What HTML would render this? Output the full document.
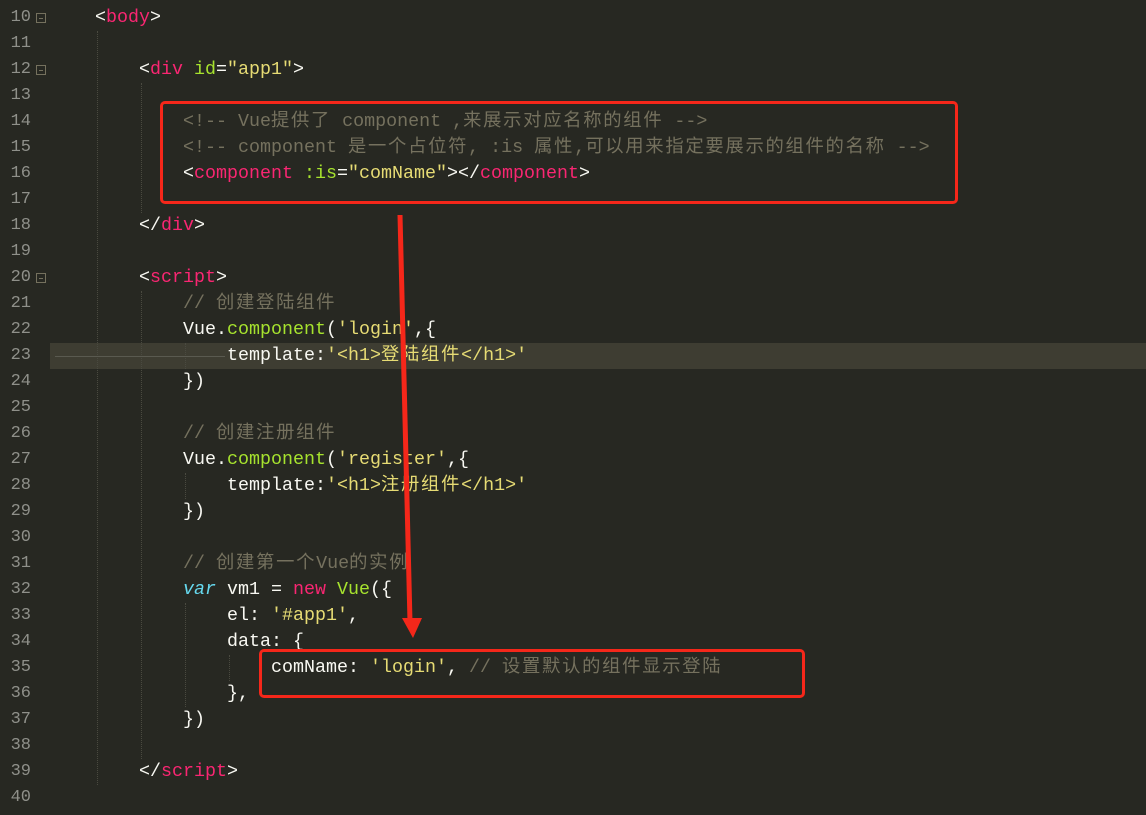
<!DOCTYPE html>
<html><head><meta charset="utf-8"><style>
body{margin:0;width:1146px;height:815px;background:#272822;overflow:hidden;position:relative;font-family:"Liberation Mono","Noto Sans CJK SC",monospace;font-size:18.33px}
.l{position:absolute;left:0;height:26px;line-height:26px;white-space:pre;color:#f8f8f2}
.n{position:absolute;left:0;width:31px;text-align:right;color:#8f908a;font-size:17px}
.f{position:absolute;left:36px;top:8px;width:8px;height:8px;border:1px solid #75715e}
.f:after{content:"";position:absolute;left:2px;top:4px;width:4px;height:1px;background:#75715e}
.c{position:absolute;white-space:pre}
.z{letter-spacing:1.7px}
.t{color:#f92672}.a{color:#a6e22e}.s{color:#e6db74}.m{color:#75715e}.v{color:#66d9ef;font-style:italic}
.g{position:absolute;width:0;border-left:1px dotted #4a4a40}
</style></head><body>
<div style="position:absolute;left:50px;top:343px;width:1096px;height:26px;background:#3e3d32"></div>
<div class="g" style="left:97px;top:31px;height:754px"></div>
<div class="g" style="left:141px;top:83px;height:130px"></div>
<div class="g" style="left:141px;top:291px;height:468px"></div>
<div class="g" style="left:185px;top:343px;height:26px"></div>
<div class="g" style="left:185px;top:473px;height:26px"></div>
<div class="g" style="left:185px;top:603px;height:104px"></div>
<div class="g" style="left:229px;top:655px;height:26px"></div>
<div style="position:absolute;left:55px;top:356px;width:170px;border-top:1px solid #5a5a50"></div>

<div class="l" style="top:5px"><span class="n">10</span><span class="f"></span><span class="c" style="left:95px">&lt;<span class="t">body</span>&gt;</span></div>
<div class="l" style="top:31px"><span class="n">11</span></div>
<div class="l" style="top:57px"><span class="n">12</span><span class="f"></span><span class="c" style="left:139px">&lt;<span class="t">div</span> <span class="a">id</span>=<span class="s">"app1"</span>&gt;</span></div>
<div class="l" style="top:83px"><span class="n">13</span></div>
<div class="l" style="top:109px"><span class="n">14</span><span class="c m" style="left:183px">&lt;!-- Vue<span class="z">提供了</span> component ,<span class="z">来展示对应名称的组件</span> --&gt;</span></div>
<div class="l" style="top:135px"><span class="n">15</span><span class="c m" style="left:183px">&lt;!-- component <span class="z">是一个占位符</span>, :is <span class="z">属性</span>,<span class="z">可以用来指定要展示的组件的名称</span> --&gt;</span></div>
<div class="l" style="top:161px"><span class="n">16</span><span class="c" style="left:183px">&lt;<span class="t">component</span> <span class="a">:is</span>=<span class="s">"comName"</span>&gt;&lt;/<span class="t">component</span>&gt;</span></div>
<div class="l" style="top:187px"><span class="n">17</span></div>
<div class="l" style="top:213px"><span class="n">18</span><span class="c" style="left:139px">&lt;/<span class="t">div</span>&gt;</span></div>
<div class="l" style="top:239px"><span class="n">19</span></div>
<div class="l" style="top:265px"><span class="n">20</span><span class="f"></span><span class="c" style="left:139px">&lt;<span class="t">script</span>&gt;</span></div>
<div class="l" style="top:291px"><span class="n">21</span><span class="c m" style="left:183px">// <span class="z">创建登陆组件</span></span></div>
<div class="l" style="top:317px"><span class="n">22</span><span class="c" style="left:183px">Vue.<span class="a">component</span>(<span class="s">'login'</span>,{</span></div>
<div class="l" style="top:343px"><span class="n">23</span><span class="c" style="left:227px">template:<span class="s">'&lt;h1&gt;<span class="z">登陆组件</span>&lt;/h1&gt;'</span></span></div>
<div class="l" style="top:369px"><span class="n">24</span><span class="c" style="left:183px">})</span></div>
<div class="l" style="top:395px"><span class="n">25</span></div>
<div class="l" style="top:421px"><span class="n">26</span><span class="c m" style="left:183px">// <span class="z">创建注册组件</span></span></div>
<div class="l" style="top:447px"><span class="n">27</span><span class="c" style="left:183px">Vue.<span class="a">component</span>(<span class="s">'register'</span>,{</span></div>
<div class="l" style="top:473px"><span class="n">28</span><span class="c" style="left:227px">template:<span class="s">'&lt;h1&gt;<span class="z">注册组件</span>&lt;/h1&gt;'</span></span></div>
<div class="l" style="top:499px"><span class="n">29</span><span class="c" style="left:183px">})</span></div>
<div class="l" style="top:525px"><span class="n">30</span></div>
<div class="l" style="top:551px"><span class="n">31</span><span class="c m" style="left:183px">// <span class="z">创建第一个</span>Vue<span class="z">的实例</span></span></div>
<div class="l" style="top:577px"><span class="n">32</span><span class="c" style="left:183px"><span class="v">var</span> vm1 = <span class="t">new</span> <span class="a">Vue</span>({</span></div>
<div class="l" style="top:603px"><span class="n">33</span><span class="c" style="left:227px">el: <span class="s">'#app1'</span>,</span></div>
<div class="l" style="top:629px"><span class="n">34</span><span class="c" style="left:227px">data: {</span></div>
<div class="l" style="top:655px"><span class="n">35</span><span class="c" style="left:271px">comName: <span class="s">'login'</span>, <span class="m">// <span class="z">设置默认的组件显示登陆</span></span></span></div>
<div class="l" style="top:681px"><span class="n">36</span><span class="c" style="left:227px">},</span></div>
<div class="l" style="top:707px"><span class="n">37</span><span class="c" style="left:183px">})</span></div>
<div class="l" style="top:733px"><span class="n">38</span></div>
<div class="l" style="top:759px"><span class="n">39</span><span class="c" style="left:139px">&lt;/<span class="t">script</span>&gt;</span></div>
<div class="l" style="top:785px"><span class="n">40</span></div>

<div style="position:absolute;left:160px;top:101px;width:792px;height:97px;border:3px solid #f5271a;border-radius:5px"></div>
<div style="position:absolute;left:259px;top:649px;width:540px;height:43px;border:3px solid #f5271a;border-radius:5px"></div>
<svg style="position:absolute;left:0;top:0" width="1146" height="815">
<line x1="400" y1="215" x2="410" y2="622" stroke="#f5271a" stroke-width="5"/>
<polygon points="402,618 422,618 413,638" fill="#f5271a"/>
</svg>
</body></html>
